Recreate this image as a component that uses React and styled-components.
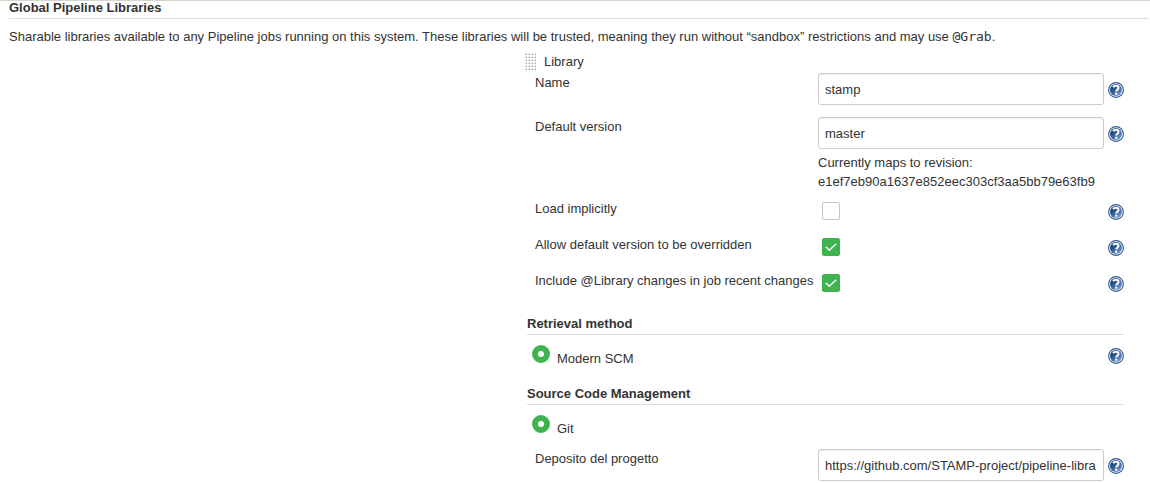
import React, { useId, useState } from "react";
import styled, { createGlobalStyle } from "styled-components";

const GlobalStyle = createGlobalStyle`
  *, *::before, *::after { box-sizing: border-box; }
  body {
    margin: 0;
    background: #fff;
    color: #333;
    font-family: "Liberation Sans", Helvetica, Arial, sans-serif;
    font-size: 13px;
    line-height: 19px;
  }
`;

const Page = styled.main`
  border-top: 1px solid #d3d7cf;
  padding: 0 1px 0 9px;
`;

const PageTitle = styled.h1`
  margin: 0;
  padding-bottom: 4px;
  border-bottom: 1px solid #ddd;
  font-size: 13px;
  line-height: 13px;
  font-weight: bold;
`;

const Description = styled.p`
  margin: 8px 0 6px;
`;

const Code = styled.code`
  font-family: "DejaVu Sans Mono", monospace;
  font-size: 13px;
  line-height: 15px;
`;

const LibraryForm = styled.form`
  margin: 0 25px 0 518px;
`;

const LibraryHeader = styled.div`
  display: flex;
  align-items: center;
  gap: 8px;
  margin: 0 0 2px -2px;
`;

const DragHandle = styled.svg`
  display: block;
  width: 11px;
  height: 17px;
  cursor: move;
`;

const Fields = styled.div`
  padding-left: 8px;
`;

const Row = styled.div`
  display: grid;
  grid-template-columns: 283px minmax(0, 1fr) 16px;
  align-items: start;
  margin-bottom: ${(p) => p.$gap || 0}px;
`;

const RowLabel = styled.label`
  white-space: nowrap;
`;

const FieldCell = styled.div`
  padding-right: 4px;
`;

const TextInput = styled.input.attrs({ type: "text" })`
  display: block;
  width: 100%;
  height: 32px;
  padding: 0 6px;
  border: 1px solid #ccc;
  border-radius: 3px;
  background: #fff;
  box-shadow: inset 0 1px 1px rgba(0, 0, 0, 0.075);
  color: #333;
  font: inherit;
`;

const Hint = styled.div`
  padding-top: 4px;
`;

const HintLine = styled.div`
  overflow-wrap: anywhere;
`;

const Checkbox = styled.input.attrs({ type: "checkbox" })`
  appearance: none;
  display: block;
  width: 18px;
  height: 18px;
  margin: 3px 0 0 4px;
  border: 1px solid #c3c6cd;
  border-radius: 2px;
  background: #fff;

  &:checked {
    border-color: #3fb34f;
    background: #3fb34f
      url("data:image/svg+xml,%3Csvg xmlns='http://www.w3.org/2000/svg' viewBox='0 0 16 16'%3E%3Cpath d='M2.8 7.8 6.3 11.3 13.2 4.8' fill='none' stroke='white' stroke-width='1.3'/%3E%3C/svg%3E")
      center / 16px 16px no-repeat;
  }
`;

const Radio = styled.input.attrs({ type: "radio" })`
  appearance: none;
  width: 18px;
  height: 18px;
  margin: 0;
  border: 1px solid #c3c6cd;
  border-radius: 50%;
  background: #fff;

  &:checked {
    border: 6px solid #3fb34f;
  }
`;

const SectionTitle = styled.h2`
  margin: 0 0 10px;
  padding-bottom: 1px;
  border-bottom: 1px solid #ddd;
  font-size: 13px;
  line-height: 19px;
  font-weight: bold;
`;

const RadioRow = styled.div`
  display: flex;
  align-items: flex-start;
  justify-content: space-between;
  margin-bottom: ${(p) => p.$gap}px;
`;

const RadioLabel = styled.label`
  display: flex;
  align-items: flex-start;
  gap: 7px;
  padding-left: 5px;
`;

const RadioText = styled.span`
  padding-top: 4px;
`;

const HelpButton = styled.button.attrs({ type: "button" })`
  display: block;
  width: 16px;
  height: 16px;
  margin: ${(p) => p.$top}px 0 0;
  padding: 0;
  border: 0;
  background: none;
  cursor: pointer;
`;

function Help({ top, topic }) {
  const id = useId();
  return (
    <HelpButton $top={top} aria-label={`Help for ${topic}`}>
      <svg width="16" height="16" viewBox="0 0 16 16" display="block" aria-hidden="true">
        <defs>
          <linearGradient id={id} x1="0" y1="0" x2="1" y2="1">
            <stop offset="0.3" stopColor="#204a87" />
            <stop offset="1" stopColor="#86a9d6" />
          </linearGradient>
        </defs>
        <circle cx="8" cy="8" r="7.4" fill="#fff" stroke="#31588f" strokeWidth="1.1" />
        <circle cx="8" cy="8" r="6" fill={`url(#${id})`} />
        <path
          d="M5.2 5.3C5.8 4.1 6.9 3.7 8 3.7C9.6 3.7 10.5 4.5 10.5 5.7C10.5 7.4 8.2 7.5 8.2 9.6"
          fill="none"
          stroke="#fff"
          strokeWidth="2"
        />
        <rect x="7.1" y="10.7" width="2.2" height="2.1" fill="#fff" />
      </svg>
    </HelpButton>
  );
}

function TextRow({ label, value, gap, children }) {
  const id = useId();
  const [text, setText] = useState(value);
  return (
    <Row $gap={gap}>
      <RowLabel htmlFor={id}>{label}</RowLabel>
      <FieldCell>
        <TextInput id={id} value={text} onChange={(e) => setText(e.target.value)} />
        {children}
      </FieldCell>
      <Help top={9} topic={label} />
    </Row>
  );
}

function CheckRow({ label, checked, gap }) {
  const id = useId();
  return (
    <Row $gap={gap}>
      <RowLabel htmlFor={id}>{label}</RowLabel>
      <FieldCell>
        <Checkbox id={id} defaultChecked={checked} />
      </FieldCell>
      <Help top={5} topic={label} />
    </Row>
  );
}

const gripDots = [0, 3, 6, 9, 12, 15].flatMap((y) => [0, 3, 6, 9].map((x) => [x, y]));

export default function App() {
  return (
    <>
      <GlobalStyle />
      <Page>
        <PageTitle>Global Pipeline Libraries</PageTitle>
        <Description>
          Sharable libraries available to any Pipeline jobs running on this system. These libraries
          will be trusted, meaning they run without “sandbox” restrictions and may use{" "}
          <Code>@Grab</Code>.
        </Description>
        <LibraryForm>
          <LibraryHeader>
            <DragHandle viewBox="0 0 11 17" aria-hidden="true">
              {gripDots.map(([x, y]) => (
                <g key={`${x}-${y}`}>
                  <path d={`M${x + 1} ${y}h1v1h-1zM${x} ${y + 1}h1v1h-1z`} fill="#d0d0cc" />
                  <path d={`M${x + 1} ${y + 1}h1v1h-1z`} fill="#a8a8a4" />
                </g>
              ))}
            </DragHandle>
            <span>Library</span>
          </LibraryHeader>
          <Fields>
            <TextRow label="Name" value="stamp" gap={12} />
            <TextRow label="Default version" value="master" gap={8}>
              <Hint>
                <HintLine>Currently maps to revision:</HintLine>
                <HintLine>e1ef7eb90a1637e852eec303cf3aa5bb79e63fb9</HintLine>
              </Hint>
            </TextRow>
            <CheckRow label="Load implicitly" gap={15} />
            <CheckRow label="Allow default version to be overridden" checked gap={15} />
            <CheckRow label="Include @Library changes in job recent changes" checked gap={22} />
          </Fields>
          <SectionTitle>Retrieval method</SectionTitle>
          <RadioRow $gap={16}>
            <RadioLabel>
              <Radio name="retrieval" defaultChecked />
              <RadioText>Modern SCM</RadioText>
            </RadioLabel>
            <Help top={3} topic="Modern SCM" />
          </RadioRow>
          <SectionTitle>Source Code Management</SectionTitle>
          <RadioRow $gap={11}>
            <RadioLabel>
              <Radio name="scm" defaultChecked />
              <RadioText>Git</RadioText>
            </RadioLabel>
          </RadioRow>
          <Fields>
            <TextRow
              label="Deposito del progetto"
              value="https://github.com/STAMP-project/pipeline-libra"
            />
          </Fields>
        </LibraryForm>
      </Page>
    </>
  );
}
